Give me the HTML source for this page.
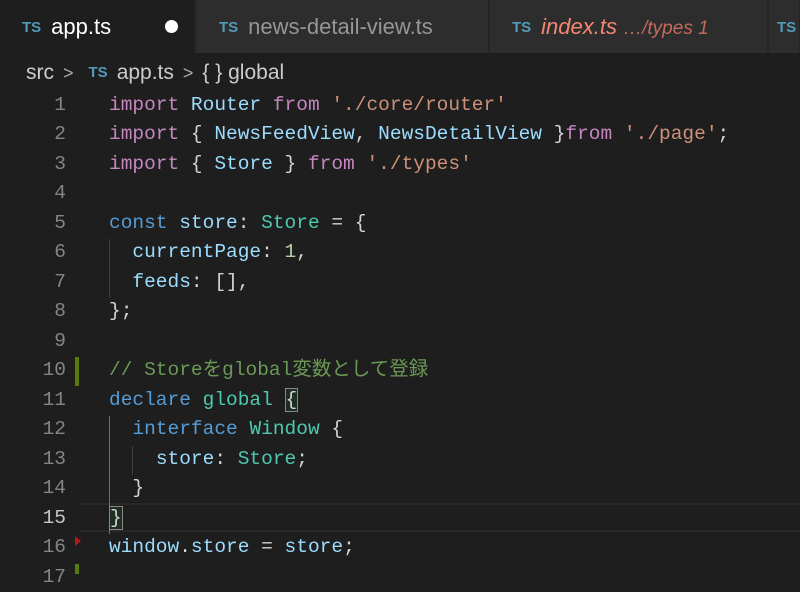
<!DOCTYPE html>
<html><head><meta charset="utf-8"><style>
*{margin:0;padding:0;box-sizing:border-box}
body{width:800px;height:572px;background:#1e1e1e;overflow:hidden;position:relative;font-family:"Liberation Sans","Noto Sans CJK JP",sans-serif}
.tabs{position:absolute;left:0;top:0;width:800px;height:53px;background:#252526}
.tab{position:absolute;top:0;height:53px;background:#2d2d2d;border-right:1px solid #252526;font-size:22px;line-height:53px;color:#969696;white-space:nowrap;overflow:hidden}
.ts{color:#519aba;font-size:15px;font-weight:bold;margin-right:10px;vertical-align:2px}
.bc{position:absolute;left:26px;top:60px;font-size:21px;color:#cccccc;line-height:26px;white-space:nowrap}
.bc .ts{font-size:15px}
.ch{color:#aaa;margin:0 9px;font-size:18px}
.ln{position:absolute;left:0;width:66px;text-align:right;font-family:"Liberation Mono",monospace;font-size:19.5px;color:#858585;line-height:29.47px}
.code{position:absolute;left:109px;font-family:"Liberation Mono","Noto Sans CJK JP",monospace;font-size:19.5px;color:#d4d4d4;line-height:29.47px;white-space:pre}
.k{color:#c586c0}.b{color:#569cd6}.v{color:#9cdcfe}.t{color:#4ec9b0}.s{color:#ce9178}.n{color:#b5cea8}.c{color:#6a9955}
.g{position:absolute;width:1px;background:#404040}
.box{border:1px solid #888;background:#1f2e22}
</style></head><body>
<div class="tabs">
<div class="tab" style="left:0;width:195px;background:#1e1e1e;color:#fff;padding-left:22px"><span class="ts">TS</span>app.ts<span style="position:absolute;left:165px;top:20px;width:13px;height:13px;border-radius:50%;background:#fff"></span></div>
<div class="tab" style="left:196px;width:293px;padding-left:23px"><span class="ts">TS</span>news-detail-view.ts</div>
<div class="tab" style="left:490px;width:278px;padding-left:22px"><span class="ts">TS</span><i style="color:#f48771">index.ts</i> <i style="color:#c2695d;font-size:19px">…/types 1</i></div>
<div class="tab" style="left:769px;width:31px;padding-left:8px"><span class="ts">TS</span></div>
</div>
<div class="bc">src<span class="ch">&gt;</span><span class="ts" style="margin:0 9px 0 6px">TS</span>app.ts<span class="ch">&gt;</span>{ }&nbsp;global</div>
<div style="position:absolute;left:75px;top:357px;width:4px;height:29px;background:#587c0c"></div>
<div style="position:absolute;left:75px;top:564px;width:4px;height:10px;background:#587c0c"></div>
<div style="position:absolute;left:75px;top:536px;width:0;height:0;border-left:6px solid #b01a1a;border-top:5px solid transparent;border-bottom:5px solid transparent"></div>
<div style="position:absolute;left:80px;top:503px;width:720px;height:29px;border-top:2px solid #282828;border-bottom:2px solid #282828"></div>
<div class="g" style="left:109px;top:239px;height:59px"></div>
<div class="g" style="left:109px;top:416px;height:118px;background:#707070"></div>
<div class="g" style="left:132px;top:446px;height:29px"></div>
<div class="ln" style="top:91px">1<br>2<br>3<br>4<br>5<br>6<br>7<br>8<br>9<br>10<br>11<br>12<br>13<br>14<br><span style="color:#c6c6c6">15</span><br>16<br>17</div>
<div class="code" style="top:91px"><span class="k">import</span> <span class="v">Router</span> <span class="k">from</span> <span class="s">'./core/router'</span>
<span class="k">import</span> { <span class="v">NewsFeedView</span>, <span class="v">NewsDetailView</span> }<span class="k">from</span> <span class="s">'./page'</span>;
<span class="k">import</span> { <span class="v">Store</span> } <span class="k">from</span> <span class="s">'./types'</span>

<span class="b">const</span> <span class="v">store</span>: <span class="t">Store</span> = {
  <span class="v">currentPage</span>: <span class="n">1</span>,
  <span class="v">feeds</span>: [],
};

<span class="c">// Storeをglobal変数として登録</span>
<span class="b">declare</span> <span class="t">global</span> <span class="box">{</span>
  <span class="b">interface</span> <span class="t">Window</span> {
    <span class="v">store</span>: <span class="t">Store</span>;
  }
<span class="box">}</span>
<span class="v">window</span>.<span class="v">store</span> = <span class="v">store</span>;
</div>
</body></html>
